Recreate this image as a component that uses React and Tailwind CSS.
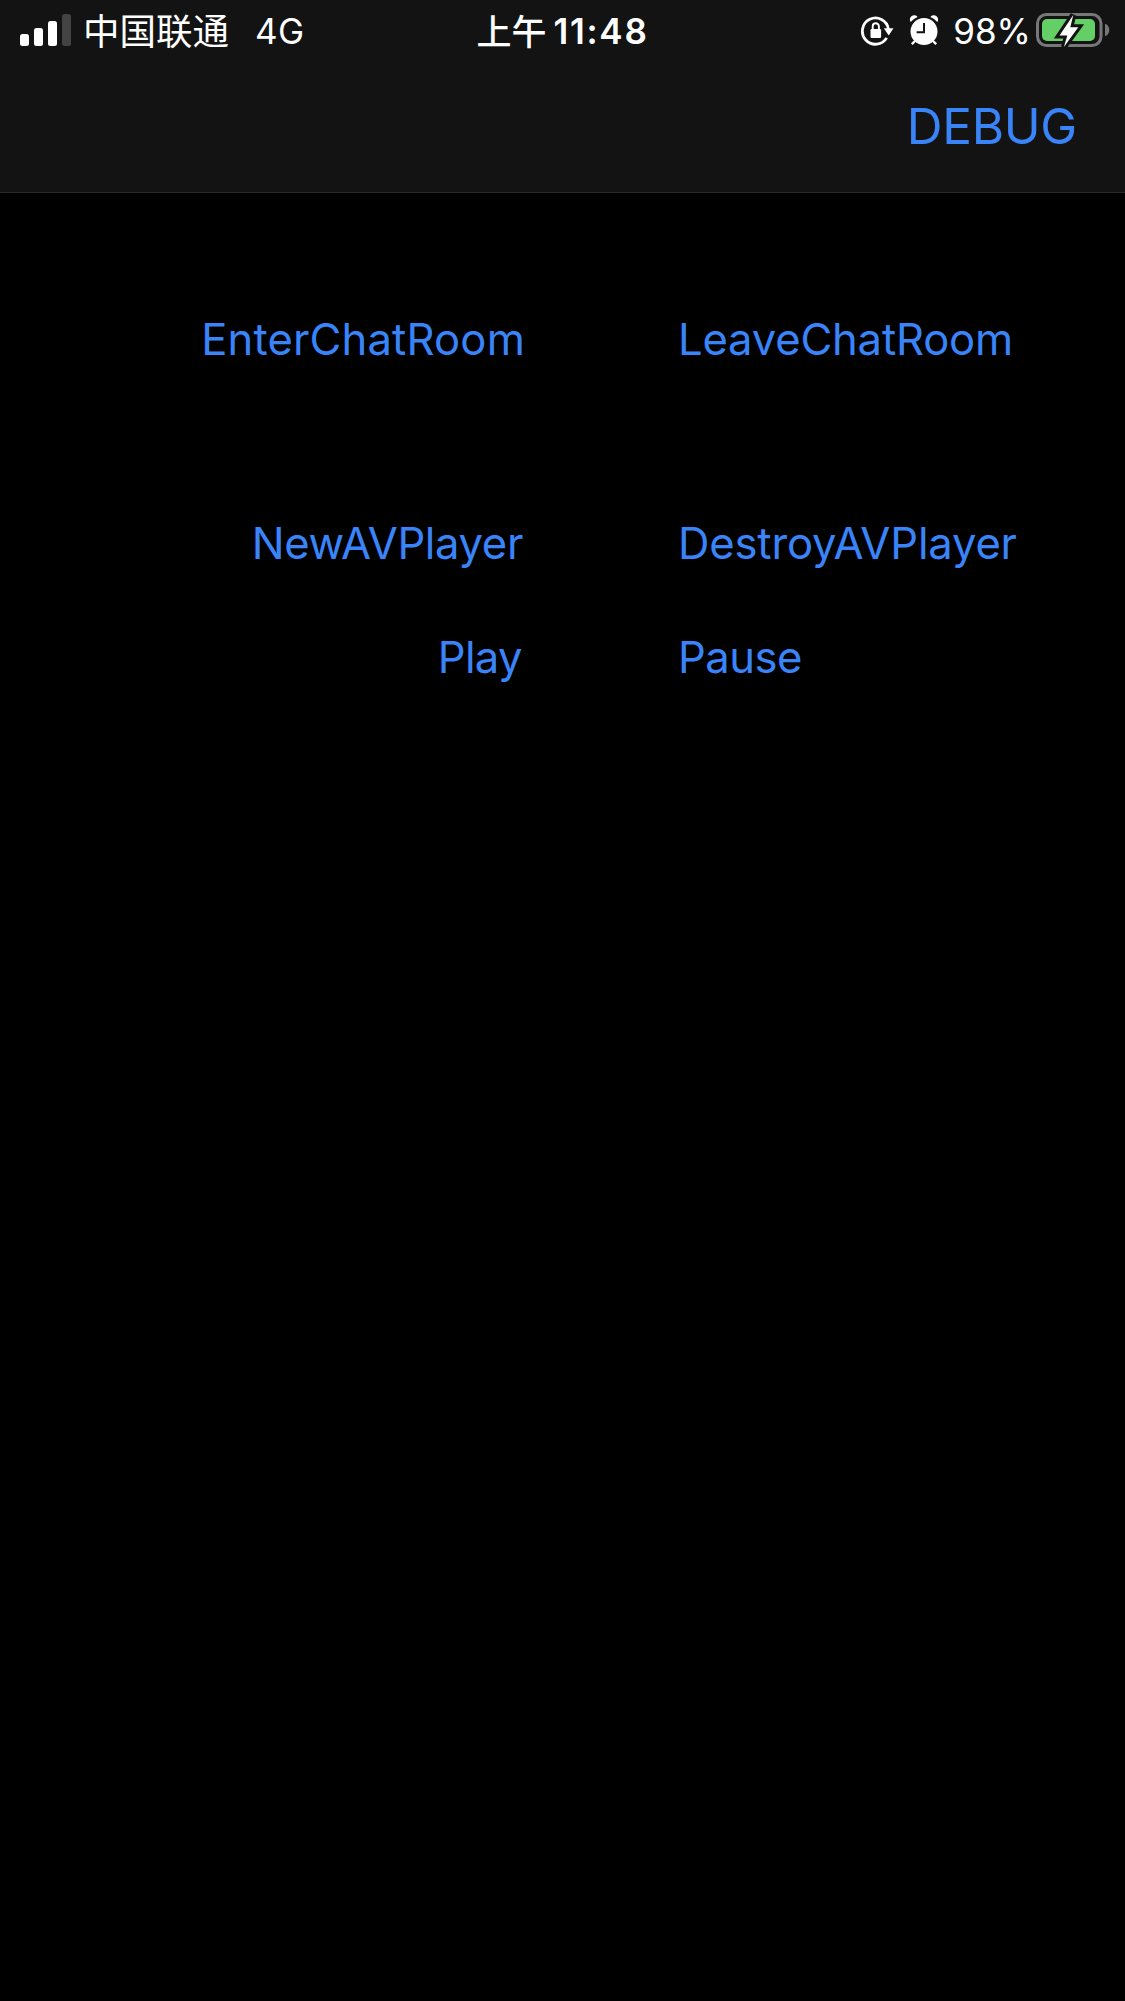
function SignalBars() {
  return (
    <svg className="block shrink-0" width="52" height="34" viewBox="0 0 52 34">
      <rect x="0" y="20" width="9" height="12" rx="2.5" fill="#fff" />
      <rect x="14" y="14" width="9" height="18" rx="2.5" fill="#fff" />
      <rect x="28" y="7" width="9" height="25" rx="2.5" fill="#fff" />
      <rect x="42" y="0" width="9" height="32" rx="2.5" fill="#434343" />
    </svg>
  );
}

function RotationLock() {
  return (
    <svg className="block shrink-0" width="34" height="32" viewBox="0 0 34 32">
      <path d="M26.7 22.9A13.1 13.1 0 1 1 28.4 14" fill="none" stroke="#fff" strokeWidth="2.8" />
      <path d="M23.8 13.2H33.5L28.7 20.4Z" fill="#fff" />
      <rect x="10.5" y="14" width="10.6" height="9" rx="1.2" fill="#fff" />
      <path d="M12.7 15V11.4a3.1 3.1 0 0 1 6.2 0V15" fill="none" stroke="#fff" strokeWidth="1.9" />
    </svg>
  );
}

function Alarm() {
  return (
    <svg className="block shrink-0" width="30" height="32" viewBox="0 0 30 32">
      <circle cx="15" cy="16.5" r="13.5" fill="#fff" />
      <path d="M1.6 6.9A4 4 0 0 1 8.6 2.1Q4.5 3.9 1.6 6.9Z" fill="#fff" />
      <path d="M28.4 6.9A4 4 0 0 0 21.4 2.1Q25.5 3.9 28.4 6.9Z" fill="#fff" />
      <path d="M6 26L2.8 29.2M24 26L27.2 29.2" stroke="#fff" strokeWidth="2.4" />
      <path d="M15 8V17.2H7.6" fill="none" stroke="#131313" strokeWidth="2" />
    </svg>
  );
}

function Battery() {
  return (
    <svg className="block shrink-0" width="76" height="38" viewBox="0 0 76 38">
      <rect x="1.5" y="2.5" width="63.5" height="31" rx="9" fill="none" stroke="#777" strokeWidth="3" />
      <rect x="6" y="7" width="53" height="22" rx="5" fill="#65cf67" />
      <path d="M69 11.8Q73.3 13.6 73.3 18T69 24.2Z" fill="#777" />
      <path
        d="M37.3 3L23.5 23.5H31.3L27.9 35L42.3 15.2H34.3Z"
        fill="#fff"
        stroke="#131313"
        strokeWidth="6"
        paintOrder="stroke"
      />
    </svg>
  );
}

function StatusBar() {
  return (
    <div className="grid h-[62px] grid-cols-[1fr_auto_1fr] items-center whitespace-nowrap pl-5 pr-[13px] text-[35px] leading-[62px] text-white">
      <div className="flex items-center">
        <SignalBars />
        <span className='-mt-0.5 ml-[11px] font-["Noto_Sans_CJK_SC",sans-serif] text-[36.5px] leading-[60px]'>中国联通</span>
        <span className="ml-[26px] tracking-[0.3px]">4G</span>
      </div>
      <div className="mr-[7px] flex items-center">
        <span className='-mt-0.5 font-["Noto_Sans_CJK_SC",sans-serif] text-[35px] font-medium leading-[60px]'>上午</span>
        <span className="ml-[7px] font-semibold tracking-[1.7px]">11:48</span>
      </div>
      <div className="flex items-center justify-end">
        <RotationLock />
        <div className="ml-[15px]"><Alarm /></div>
        <span className="ml-[14px]">98%</span>
        <div className="ml-[5px]"><Battery /></div>
      </div>
    </div>
  );
}

function Action({ children, className }) {
  return (
    <button className={`block h-[54px] whitespace-nowrap text-[43.6px] leading-[54px] ${className}`}>
      {children}
    </button>
  );
}

export default function App() {
  return (
    <main className='h-[2001px] w-[1125px] overflow-hidden bg-black font-["Inter",sans-serif] text-[#3a84fa]'>
      <header className="h-[193px] border-b border-[#2a2a2a] bg-[#131313]">
        <StatusBar />
        <nav className="flex justify-end pr-[48px] pt-[34px]">
          <button className="text-[49.5px] leading-[60px] tracking-[-0.3px]">DEBUG</button>
        </nav>
      </header>
      <section className="grid grid-cols-[525px_1fr] gap-x-[153px] pt-[120px]">
        <Action className="justify-self-end tracking-[0.15px]">EnterChatRoom</Action>
        <Action className="justify-self-start tracking-[-0.2px]">LeaveChatRoom</Action>
        <Action className="mr-[2px] mt-[150px] justify-self-end tracking-[-0.35px]">NewAVPlayer</Action>
        <Action className="mt-[150px] justify-self-start tracking-[-0.18px]">DestroyAVPlayer</Action>
        <Action className="mr-[3px] mt-[60px] justify-self-end tracking-[-0.6px]">Play</Action>
        <Action className="mt-[60px] justify-self-start tracking-[-0.5px]">Pause</Action>
      </section>
    </main>
  );
}
